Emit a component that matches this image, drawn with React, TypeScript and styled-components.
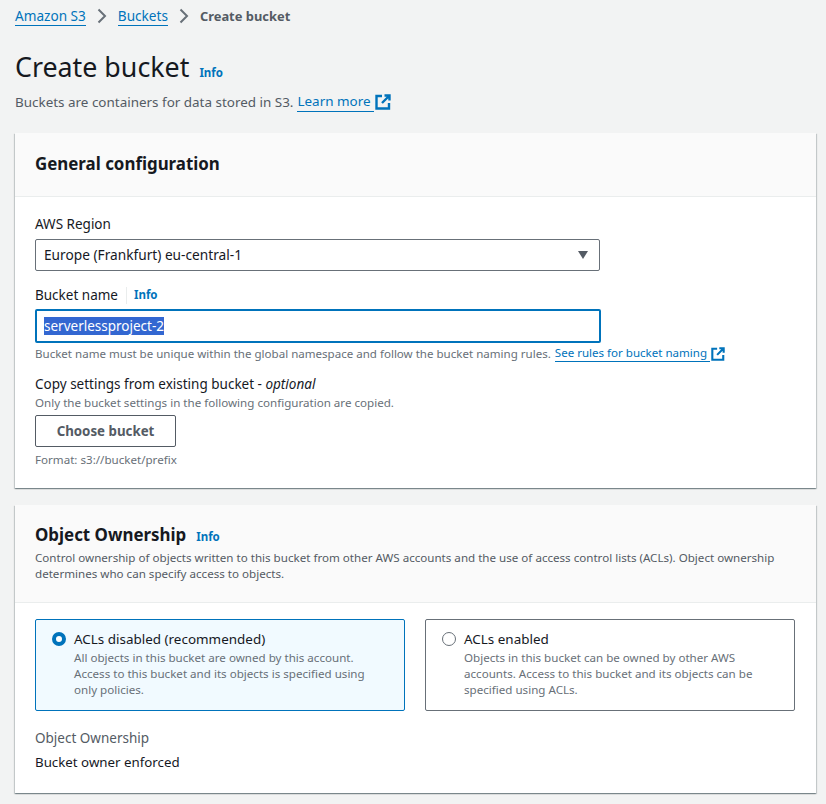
import { FC } from "react";
import styled, { createGlobalStyle } from "styled-components";

const GlobalStyle = createGlobalStyle`
  html, body {
    margin: 0;
    padding: 0;
    background: #f2f3f3;
    font-family: "Noto Sans", "Open Sans", sans-serif;
    font-size: 14px;
    color: #16191f;
  }
`;

const Page = styled.div`
  width: 826px;
  height: 804px;
  overflow: hidden;
  padding: 6px 10px 0 15px;
  box-sizing: border-box;
`;

const Breadcrumbs = styled.nav`
  display: flex;
  align-items: center;
  height: 20px;
  line-height: 20px;
`;

const Crumb = styled.a`
  color: #0073bb;
  font-size: 13.6px;
  text-decoration: none;
  border-bottom: 1px solid #0073bb;
  line-height: 19px;
  height: 19px;
`;

const CrumbCurrent = styled.span`
  color: #545b64;
  font-weight: 700;
  font-size: 12.9px;
`;

const CrumbChevron = styled.svg`
  width: 16px;
  height: 16px;
  margin: 0 8px 0 8px;
  fill: none;
  stroke: #687078;
  stroke-width: 2;
`;

const TitleRow = styled.div`
  display: flex;
  align-items: baseline;
  margin-top: 21px;
  height: 40px;
`;

const Title = styled.h1`
  margin: 0;
  font-size: 26.8px;
  line-height: 40px;
  font-weight: 400;
  color: #16191f;
`;

const InfoLink = styled.a<{ $gap?: number }>`
  margin-left: ${({ $gap }) => $gap ?? 10}px;
  color: #0073bb;
  font-size: 11.5px;
  font-weight: 700;
  text-decoration: none;
`;

const Description = styled.p`
  margin: 4px 0 0;
  color: #545b64;
  font-size: 13.45px;
  line-height: 20px;
  display: flex;
  align-items: center;
`;

const ExternalLink = styled.a`
  color: #0073bb;
  text-decoration: none;
  border-bottom: 1px solid #0073bb;
  padding-right: 3px;
  margin-left: 4px;
`;

const ExternalIcon = styled.svg<{ $size: number }>`
  width: ${({ $size }) => $size}px;
  height: ${({ $size }) => $size}px;
  margin-left: 1px;
  fill: none;
  stroke: #0073bb;
  stroke-width: 2.4;
`;

const Card = styled.section<{ $top: number; $height: number }>`
  width: 801px;
  height: ${({ $height }) => $height}px;
  margin-top: ${({ $top }) => $top}px;
  background: #ffffff;
  box-sizing: border-box;
  box-shadow: 0 1px 1px 0 rgba(0, 28, 36, 0.3), 1px 1px 1px 0 rgba(0, 28, 36, 0.15),
    -1px 1px 1px 0 rgba(0, 28, 36, 0.15);
`;

const CardHeader = styled.header<{ $height: number }>`
  height: ${({ $height }) => $height}px;
  box-sizing: border-box;
  background: #fafafa;
  border-bottom: 1px solid #eaeded;
  padding: 0 20px;
`;

const CardTitle = styled.h2`
  margin: 0;
  font-size: 16.9px;
  line-height: 22px;
  font-weight: 700;
  color: #16191f;
`;

const GeneralHeading = styled.div`
  padding-top: 20px;
`;

const OwnershipHeading = styled.div`
  display: flex;
  align-items: baseline;
  padding-top: 19px;
`;

const CardHeaderText = styled.p`
  margin: 4px 0 0;
  font-size: 11.6px;
  line-height: 16px;
  color: #545b64;
`;

const CardBody = styled.div<{ $top: number }>`
  padding: ${({ $top }) => $top}px 20px 0;
`;

const FieldLabel = styled.label`
  display: flex;
  align-items: center;
  height: 20px;
  font-size: 13.5px;
  line-height: 20px;
  color: #16191f;
`;

const LabelDivider = styled.span`
  width: 1px;
  height: 17px;
  background: #eaeded;
  margin: 0 7px 0 8px;
`;

const SelectBox = styled.div`
  margin-top: 5px;
  width: 565px;
  height: 32px;
  box-sizing: border-box;
  border: 1px solid #687078;
  border-radius: 2px;
  background: #ffffff;
  display: flex;
  align-items: center;
  justify-content: space-between;
  padding: 0 11px 1px 8px;
  font-size: 13.7px;
`;

const Caret = styled.span`
  width: 0;
  height: 0;
  border-left: 5px solid transparent;
  border-right: 5px solid transparent;
  border-top: 8px solid #545b64;
`;

const InputBox = styled.div`
  margin-top: 4px;
  width: 566px;
  height: 34px;
  box-sizing: border-box;
  border: 2px solid #0073bb;
  border-radius: 2px;
  display: flex;
  align-items: center;
  padding: 0 0 1px 7px;
  font-size: 13.5px;
`;

const SelectedText = styled.span`
  background: #3367d1;
  color: #ffffff;
  line-height: 18px;
`;

const HelpRow = styled.div`
  display: flex;
  align-items: center;
  margin-top: 2px;
  font-size: 11.55px;
  line-height: 16px;
  color: #687078;
`;

const NamingField = styled.div`
  margin-top: 14px;
`;

const CopyField = styled.div`
  margin-top: 12px;
`;

const HelpText = styled.div<{ $top?: number }>`
  margin-top: ${({ $top }) => $top ?? 0}px;
  font-size: 11.6px;
  line-height: 16px;
  color: #687078;
`;

const NormalButton = styled.button`
  display: block;
  margin: 4px 0 5px;
  width: 141px;
  height: 32px;
  box-sizing: border-box;
  background: #ffffff;
  border: 1px solid #545b64;
  border-radius: 2px;
  color: #545b64;
  font-family: inherit;
  font-size: 13.3px;
  font-weight: 700;
  padding: 0;
`;

const TilesGrid = styled.div`
  display: grid;
  grid-template-columns: 370px 370px;
  gap: 20px;
`;

const Tile = styled.div<{ $selected?: boolean }>`
  height: 92px;
  box-sizing: border-box;
  display: flex;
  gap: 8px;
  padding: 9px 14px 9px 16px;
  border: 1px solid ${({ $selected }) => ($selected ? "#0073bb" : "#687078")};
  border-radius: 2px;
  background: ${({ $selected }) => ($selected ? "#f1faff" : "#ffffff")};
`;

const Radio = styled.span<{ $selected?: boolean }>`
  flex: none;
  width: 14px;
  height: 14px;
  margin-top: 3px;
  box-sizing: border-box;
  border-radius: 50%;
  background: #ffffff;
  border: ${({ $selected }) => ($selected ? "4.5px solid #0073bb" : "1px solid #687078")};
`;

const TileTitle = styled.div`
  font-size: 13.45px;
  line-height: 20px;
  margin-bottom: 1px;
`;

const TileText = styled.div`
  font-size: 11.6px;
  line-height: 16px;
  color: #687078;
`;

const OwnershipKey = styled.div`
  margin-top: 17px;
  font-size: 13.5px;
  line-height: 20px;
  color: #545b64;
`;

const OwnershipValue = styled.div`
  margin-top: 4px;
  font-size: 13.3px;
  line-height: 20px;
  color: #16191f;
`;

const Chevron: FC = () => (
  <CrumbChevron viewBox="0 0 16 16">
    <path d="M4.5 1.5 11 8l-6.5 6.5" />
  </CrumbChevron>
);

const External: FC<{ size: number }> = ({ size }) => (
  <ExternalIcon $size={size} viewBox="0 0 16 16">
    <path d="M7 2H1.5v12.5H14V9" />
    <path d="M9.5 1.5H14.5V6.5M14.5 1.5 7 9" />
  </ExternalIcon>
);

const App: FC = () => {
  return (
    <Page>
      <GlobalStyle />
      <Breadcrumbs>
        <Crumb>Amazon S3</Crumb>
        <Chevron />
        <Crumb>Buckets</Crumb>
        <Chevron />
        <CrumbCurrent>Create bucket</CrumbCurrent>
      </Breadcrumbs>
      <TitleRow>
        <Title>Create bucket</Title>
        <InfoLink>Info</InfoLink>
      </TitleRow>
      <Description>
        Buckets are containers for data stored in S3.
        <ExternalLink>Learn more </ExternalLink>
        <External size={16} />
      </Description>

      <Card $top={21} $height={355}>
        <CardHeader $height={64}>
          <GeneralHeading>
            <CardTitle>General configuration</CardTitle>
          </GeneralHeading>
        </CardHeader>
        <CardBody $top={17}>
          <FieldLabel>AWS Region</FieldLabel>
          <SelectBox>
            Europe (Frankfurt) eu-central-1
            <Caret />
          </SelectBox>
          <NamingField>
            <FieldLabel>
              Bucket name
              <LabelDivider />
              <InfoLink $gap={0}>Info</InfoLink>
            </FieldLabel>
            <InputBox>
              <SelectedText>serverlessproject-2</SelectedText>
            </InputBox>
            <HelpRow>
              Bucket name must be unique within the global namespace and follow the bucket naming rules.
              <ExternalLink>See rules for bucket naming </ExternalLink>
              <External size={14} />
            </HelpRow>
          </NamingField>
          <CopyField>
            <FieldLabel>
              Copy settings from existing bucket -&nbsp;<em>optional</em>
            </FieldLabel>
            <HelpText $top={1}>Only the bucket settings in the following configuration are copied.</HelpText>
            <NormalButton>Choose bucket</NormalButton>
            <HelpText>Format: s3://bucket/prefix</HelpText>
          </CopyField>
        </CardBody>
      </Card>

      <Card $top={17} $height={288}>
        <CardHeader $height={98}>
          <OwnershipHeading>
            <CardTitle>Object Ownership</CardTitle>
            <InfoLink $gap={10}>Info</InfoLink>
          </OwnershipHeading>
          <CardHeaderText>
            Control ownership of objects written to this bucket from other AWS accounts and the use of access control
            lists (ACLs). Object ownership determines who can specify access to objects.
          </CardHeaderText>
        </CardHeader>
        <CardBody $top={16}>
          <TilesGrid>
            <Tile $selected>
              <Radio $selected />
              <div>
                <TileTitle>ACLs disabled (recommended)</TileTitle>
                <TileText>
                  All objects in this bucket are owned by this account.
                  <br />
                  Access to this bucket and its objects is specified using
                  <br />
                  only policies.
                </TileText>
              </div>
            </Tile>
            <Tile>
              <Radio />
              <div>
                <TileTitle>ACLs enabled</TileTitle>
                <TileText>
                  Objects in this bucket can be owned by other AWS
                  <br />
                  accounts. Access to this bucket and its objects can be
                  <br />
                  specified using ACLs.
                </TileText>
              </div>
            </Tile>
          </TilesGrid>
          <OwnershipKey>Object Ownership</OwnershipKey>
          <OwnershipValue>Bucket owner enforced</OwnershipValue>
        </CardBody>
      </Card>
    </Page>
  );
};

export default App;
